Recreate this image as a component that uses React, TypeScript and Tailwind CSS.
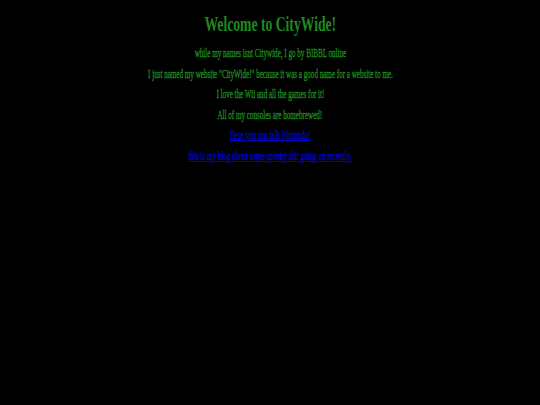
export default function App() {
  const lines = [
    "while my names isnt Citywide, I go by BIBBL online",
    'I just named my website "CityWide!" because it was a good name for a website to me.',
    "I love the Wii and all the games for it!",
    "All of my consoles are homebrewed!",
  ];
  return (
    <div className="min-h-screen bg-black text-center pt-[12px]" style={{ fontFamily: '"Liberation Serif", serif' }}>
      <h1 className="h-[24px] leading-[24px] text-[21px] font-bold text-[#1f8a1f]">
        <span className="inline-block scale-x-[0.65]">Welcome to CityWide!</span>
      </h1>
      <div className="mt-[10px] flex flex-col gap-[6.5px] [-webkit-text-stroke:0.35px]">
        {lines.map((t) => (
          <p key={t} className="h-[14px] leading-[14px] text-[12px] text-[#1f8a1f]">
            <span className="inline-block scale-x-[0.59] whitespace-nowrap">{t}</span>
          </p>
        ))}
        <p className="h-[14px] leading-[14px] text-[12px]">
          <a href="#" className="inline-block scale-x-[0.59] whitespace-nowrap text-[#0000cc] underline">
            Here you can talk Nintendo!
          </a>
        </p>
        <p className="h-[14px] leading-[14px] text-[12px]">
          <a href="#" className="inline-block scale-x-[0.59] whitespace-nowrap text-[#0000cc] underline">
            this is my blog about some spooky shit going on recently.
          </a>
        </p>
      </div>
    </div>
  );
}
